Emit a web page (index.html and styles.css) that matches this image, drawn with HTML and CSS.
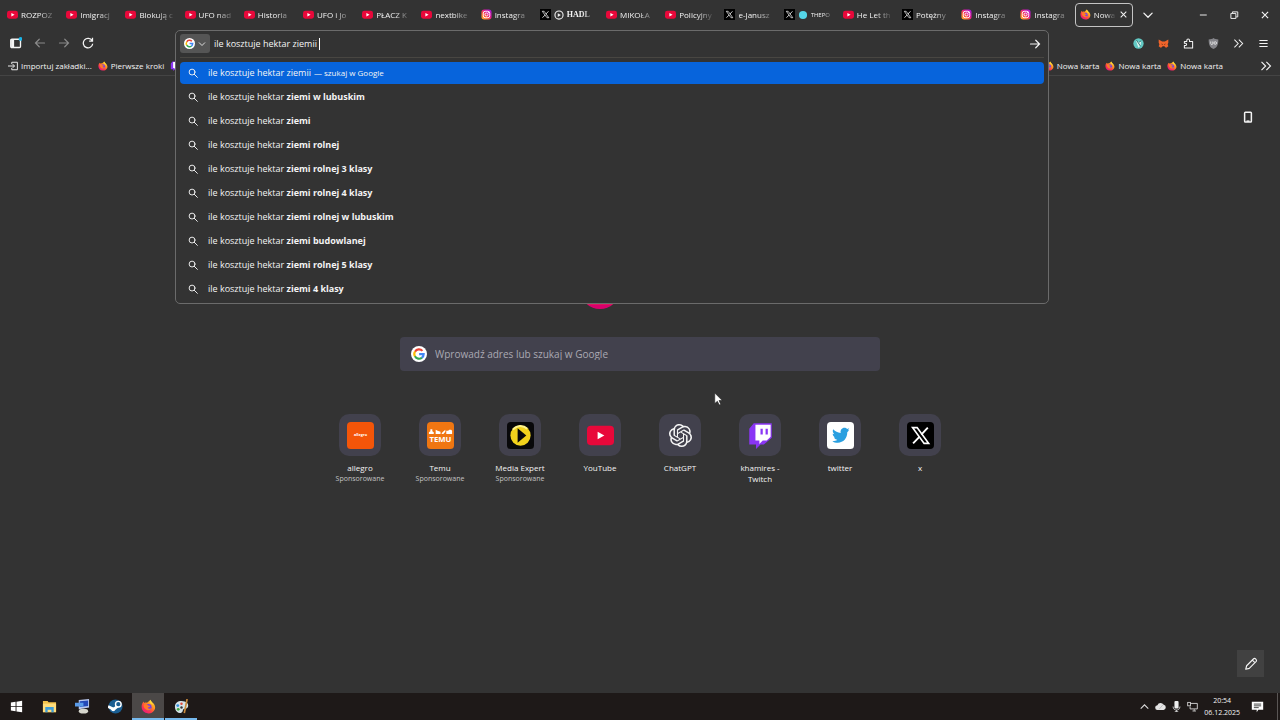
FILE: index.html
```
<!DOCTYPE html>
<html lang="pl">
<head>
  <meta charset="UTF-8">
  <meta name="viewport" content="width=device-width, initial-scale=1.0">
  <title>Nowa karta</title>
  <link rel="stylesheet" href="styles.css">
</head>
<body>
  <!-- shared icons -->
  <svg class="sprite" aria-hidden="true">
    <linearGradient id="ig" x1="0" y1="1" x2="1" y2="0">
      <stop offset="0" stop-color="#ffc530"/><stop offset=".35" stop-color="#ff5a35"/><stop offset=".6" stop-color="#e0169a"/><stop offset="1" stop-color="#9a20e0"/>
    </linearGradient>
    <linearGradient id="ff" x1="1" y1="0" x2=".2" y2="1">
      <stop offset="0" stop-color="#fff04a"/><stop offset=".4" stop-color="#ff9a1f"/><stop offset=".7" stop-color="#ff3b46"/><stop offset="1" stop-color="#e31587"/>
    </linearGradient>
    <symbol id="youtube" viewBox="0 0 24 24">
      <rect x="0" y="4" width="24" height="17" rx="5" fill="#e8083a"/>
      <path d="M9.5 8.500v8l7-4z" fill="#fff"/>
    </symbol>
    <symbol id="instagram" viewBox="0 0 24 24">
      <rect x="1" y="1" width="22" height="22" rx="6" fill="url(#ig)"/>
      <rect x="5" y="5" width="14" height="14" rx="4" fill="none" stroke="#fff" stroke-width="2"/>
      <circle cx="12" cy="12" r="3.300" fill="none" stroke="#fff" stroke-width="2"/>
      <circle cx="16.200" cy="7.800" r="1.200" fill="#fff"/>
    </symbol>
    <symbol id="x" viewBox="0 0 24 24">
      <rect width="24" height="24" fill="#000"/>
      <path d="M5 5h4l10.200 14h-4z" fill="none" stroke="#fff" stroke-width="1.500"/>
      <path d="M18.500 5l-5.800 6.300M11 13.200L5.400 19" stroke="#fff" stroke-width="1.700"/>
    </symbol>
    <symbol id="firefox" viewBox="0 0 24 24">
      <path d="M15 1c1 3 3 3.500 5.500 6.500C23 11 23.500 15 21 18.500 18.500 22 15 23.500 11.500 23 5 22.500 1 18 1 12.500 1 9 2 6.500 4 4l1 2.500C6.500 5.500 8 5.500 9 6c2-1 3-2 6-5z" fill="url(#ff)"/>
      <circle cx="12" cy="13" r="5" fill="#7542e5"/>
      <path d="M4 9c3-2 6-1 7.500 1.500L15 11c-1 2-3 1.500-4 3 1 2.500 4 2 6 .5-1 4-7 5-10 1.500C5 14 4 12 4 9z" fill="#ff7a27"/>
      <path d="M15 1c1 3 4 5 5 9-2-2-3-2.500-5-3-1-2-1-4 0-6z" fill="#ffd83a"/>
    </symbol>
    <symbol id="google" viewBox="0 0 24 24">
      <circle cx="12" cy="12" r="12" fill="#fff"/>
      <g fill="none" stroke-width="3.200">
        <path d="M17.200 7.300A7 7 0 0 0 6 8.500" stroke="#ea4335"/>
        <path d="M6 8.300a7 7 0 0 0 0 7.400" stroke="#fbbc05"/>
        <path d="M5.900 15.500a7 7 0 0 0 10.600 2" stroke="#34a853"/>
        <path d="M16.300 17.600A7 7 0 0 0 19 12.200h-6.800" stroke="#4285f4"/>
      </g>
    </symbol>
    <symbol id="twitch" viewBox="0 0 24 24">
      <path d="M6 1h16v13l-7 6h-3l-4 4v-4H2V6z" fill="#8a35f5"/>
      <path d="M7.500 2.500H21V13l-3.500 3.500H14L11 19.500v-3H7.500z" fill="#fff"/>
      <path d="M12 6h2v5h-2zM16.500 6h2v5h-2z" fill="#8a35f5"/>
    </symbol>
    <symbol id="search" viewBox="0 0 16 16">
      <g fill="none" stroke="currentColor" stroke-width="1.500" stroke-linecap="round"><circle cx="6.500" cy="6.500" r="4.700"/><path d="M10 10l5 5"/></g>
    </symbol>
    <symbol id="arrow" viewBox="0 0 16 16">
      <path d="M2 8h12M9 3l5 5-5 5" fill="none" stroke="currentColor" stroke-width="1.600" stroke-linecap="round"/>
    </symbol>
    <symbol id="chevron" viewBox="0 0 16 16">
      <path d="M2.500 5.500L8 11l5.500-5.500" fill="none" stroke="currentColor" stroke-width="1.700" stroke-linecap="round"/>
    </symbol>
    <symbol id="close" viewBox="0 0 16 16">
      <path d="M3 3l10 10M13 3L3 13" fill="none" stroke="currentColor" stroke-width="1.800"/>
    </symbol>
    <symbol id="more" viewBox="0 0 16 16">
      <path d="M2 2.500L7.500 8 2 13.500M8.500 2.500L14 8l-5.500 5.500" fill="none" stroke="currentColor" stroke-width="1.500"/>
    </symbol>
  </svg>

  <header class="chrome">
    <div class="titlebar">
      <div class="tabs" role="tablist">
        <div class="tab" role="tab"><svg><use href="#youtube"/></svg><span>ROZPOZ</span></div>
        <div class="tab" role="tab"><svg><use href="#youtube"/></svg><span>Imigracj</span></div>
        <div class="tab" role="tab"><svg><use href="#youtube"/></svg><span>Blokują c</span></div>
        <div class="tab" role="tab"><svg><use href="#youtube"/></svg><span>UFO nad</span></div>
        <div class="tab" role="tab"><svg><use href="#youtube"/></svg><span>Historia</span></div>
        <div class="tab" role="tab"><svg><use href="#youtube"/></svg><span>UFO i Jo</span></div>
        <div class="tab" role="tab"><svg><use href="#youtube"/></svg><span>PŁACZ K</span></div>
        <div class="tab" role="tab"><svg><use href="#youtube"/></svg><span>nextbike</span></div>
        <div class="tab" role="tab"><svg><use href="#instagram"/></svg><span>Instagra</span></div>
        <div class="tab wide" role="tab"><svg><use href="#x"/></svg>
          <svg class="mini" viewBox="0 0 16 16"><circle cx="8" cy="8" r="6.500" fill="none" stroke="#eee" stroke-width="1.800"/><path d="M6 5v6l5-3z" fill="#eee"/></svg>
          <span class="serif">HADL</span></div>
        <div class="tab" role="tab"><svg><use href="#youtube"/></svg><span>MIKOŁA</span></div>
        <div class="tab" role="tab"><svg><use href="#youtube"/></svg><span>Policyjny</span></div>
        <div class="tab" role="tab"><svg><use href="#x"/></svg><span>e-Janusz</span></div>
        <div class="tab" role="tab"><svg><use href="#x"/></svg>
          <svg class="mini" viewBox="0 0 16 16"><circle cx="8" cy="8" r="6.500" fill="#55d6e8"/></svg>
          <span class="small">THEPO</span></div>
        <div class="tab" role="tab"><svg><use href="#youtube"/></svg><span>He Let th</span></div>
        <div class="tab" role="tab"><svg><use href="#x"/></svg><span>Potężny</span></div>
        <div class="tab" role="tab"><svg><use href="#instagram"/></svg><span>Instagra</span></div>
        <div class="tab" role="tab"><svg><use href="#instagram"/></svg><span>Instagra</span></div>
        <div class="tab active" role="tab" aria-selected="true"><svg><use href="#firefox"/></svg><span>Nowa</span>
          <button class="tab-close" aria-label="Zamknij kartę"><svg><use href="#close"/></svg></button></div>
      </div>
      <button class="icon-btn all-tabs" aria-label="Lista kart"><svg><use href="#chevron"/></svg></button>
      <div class="window-buttons">
        <button class="icon-btn" aria-label="Minimalizuj"><svg viewBox="0 0 16 16"><path d="M3 8h11" stroke="currentColor" stroke-width="1.500"/></svg></button>
        <button class="icon-btn" aria-label="Przywróć"><svg viewBox="0 0 16 16"><path d="M3 5.500h8v8H3zM5.500 5V3H14v8h-2.500" fill="none" stroke="currentColor" stroke-width="1.500"/></svg></button>
        <button class="icon-btn" aria-label="Zamknij"><svg><use href="#close"/></svg></button>
      </div>
    </div>

    <div class="navbar">
      <div class="nav-buttons">
        <button class="icon-btn" aria-label="Panel boczny"><svg viewBox="0 0 16 16"><rect x="1" y="3" width="13" height="11" rx="1.500" fill="none" stroke="currentColor" stroke-width="1.800"/><path d="M1.500 3.500h4v10h-4z" fill="currentColor"/><circle cx="14" cy="2.500" r="2.500" fill="#19b5e8"/></svg></button>
        <button class="icon-btn dim" aria-label="Wstecz" disabled><svg class="flip"><use href="#arrow"/></svg></button>
        <button class="icon-btn dim" aria-label="Dalej" disabled><svg><use href="#arrow"/></svg></button>
        <button class="icon-btn" aria-label="Odśwież"><svg viewBox="0 0 16 16"><path d="M13.500 5A6.300 6.300 0 1 0 14.300 9M14 1v4.500H9.500" fill="none" stroke="currentColor" stroke-width="1.700"/></svg></button>
      </div>

      <div class="urlbar-slot">
        <div class="urlbar">
          <div class="urlbar-input">
            <button class="engine" aria-label="Google"><svg class="engine-logo"><use href="#google"/></svg><svg class="engine-arrow"><use href="#chevron"/></svg></button>
            <input type="text" id="address" aria-label="Adres" value="ile kosztuje hektar ziemii">
            <i class="caret"></i>
            <button class="icon-btn go" aria-label="Przejdź"><svg><use href="#arrow"/></svg></button>
          </div>
          <ul class="results">
            <li class="selected"><svg><use href="#search"/></svg><span>ile kosztuje hektar ziemii</span><small>— szukaj w Google</small></li>
            <li><svg><use href="#search"/></svg><span>ile kosztuje hektar <b>ziemi w lubuskim</b></span></li>
            <li><svg><use href="#search"/></svg><span>ile kosztuje hektar <b>ziemi</b></span></li>
            <li><svg><use href="#search"/></svg><span>ile kosztuje hektar <b>ziemi rolnej</b></span></li>
            <li><svg><use href="#search"/></svg><span>ile kosztuje hektar <b>ziemi rolnej 3 klasy</b></span></li>
            <li><svg><use href="#search"/></svg><span>ile kosztuje hektar <b>ziemi rolnej 4 klasy</b></span></li>
            <li><svg><use href="#search"/></svg><span>ile kosztuje hektar <b>ziemi rolnej w lubuskim</b></span></li>
            <li><svg><use href="#search"/></svg><span>ile kosztuje hektar <b>ziemi budowlanej</b></span></li>
            <li><svg><use href="#search"/></svg><span>ile kosztuje hektar <b>ziemi rolnej 5 klasy</b></span></li>
            <li><svg><use href="#search"/></svg><span>ile kosztuje hektar <b>ziemi 4 klasy</b></span></li>
          </ul>
        </div>
      </div>

      <div class="extensions">
        <button class="icon-btn" aria-label="Rozszerzenie"><svg viewBox="0 0 16 16"><circle cx="8" cy="8" r="7.500" fill="#62c9c4"/><path d="M4 3l5 3 3-2-1 7-3 3-2-5z" fill="#d9f4ef"/><path d="M5 3l6 9M9 6l3-2" stroke="#23696b" stroke-width="1.300"/></svg></button>
        <button class="icon-btn" aria-label="MetaMask"><svg viewBox="0 0 16 16"><path d="M1 2l5 3h4l5-3v5l-1 2 1 3-3 2-2-1H6l-2 1-3-2 1-3-1-2z" fill="#f0642a"/><path d="M5 8l2 1-1 1zM11 8L9 9l1 1zM6 12h4l-1 2H7z" fill="#3b2420"/></svg></button>
        <button class="icon-btn" aria-label="Rozszerzenia"><svg viewBox="0 0 16 16"><path d="M2 5h3.500V3.500a2 2 0 0 1 4 0V5H14v9.500H2V11h1.500a1.700 1.700 0 0 0 0-3.500H2z" fill="none" stroke="currentColor" stroke-width="1.500" stroke-linejoin="round"/></svg></button>
        <button class="icon-btn" aria-label="uBlock Origin"><svg viewBox="0 0 16 16"><path d="M8 0c2 1.500 4 2 7 2 0 7-1 11-7 14C2 13 1 9 1 2c3 0 5-.5 7-2z" fill="#85858a"/><path d="M4 5v3a1.500 1.500 0 0 0 3 0V5" fill="none" stroke="#eee" stroke-width="1.200"/><circle cx="10.500" cy="7.300" r="1.900" fill="none" stroke="#eee" stroke-width="1.200"/></svg></button>
        <button class="icon-btn" aria-label="Więcej"><svg><use href="#more"/></svg></button>
        <button class="icon-btn" aria-label="Menu"><svg viewBox="0 0 16 16"><path d="M2 3.500h12M2 8h12M2 12.500h12" stroke="currentColor" stroke-width="1.500"/></svg></button>
      </div>
    </div>

    <nav class="bookmarks">
      <a href="#"><svg viewBox="0 0 16 16"><path d="M6 5V2h9v12H6v-3M0 8h10M7.500 5l3 3-3 3" fill="none" stroke="currentColor" stroke-width="1.500"/></svg>Importuj zakładki...</a>
      <a href="#"><svg><use href="#firefox"/></svg>Pierwsze kroki</a>
      <a href="#" aria-label="Twitch"><svg><use href="#twitch"/></svg></a>
      <a href="#" class="push"><svg><use href="#firefox"/></svg>Nowa karta</a>
      <a href="#"><svg><use href="#firefox"/></svg>Nowa karta</a>
      <a href="#"><svg><use href="#firefox"/></svg>Nowa karta</a>
      <button class="icon-btn overflow" aria-label="Więcej zakładek"><svg><use href="#more"/></svg></button>
    </nav>
  </header>

  <main class="newtab">
    <button class="icon-btn phone" aria-label="Telefon"><svg viewBox="0 0 16 16"><rect x="3.500" y="1.500" width="9" height="13" rx="1" fill="none" stroke="currentColor" stroke-width="2"/><path d="M6 13.500h4" stroke="currentColor" stroke-width="2"/></svg></button>

    <div class="brand"><i class="brand-logo"></i></div>

    <div class="searchbox">
      <svg><use href="#google"/></svg>
      <input type="text" aria-label="Szukaj" placeholder="Wprowadź adres lub szukaj w Google">
    </div>

    <div class="shortcuts">
      <a href="#" class="shortcut">
        <span class="tile"><svg viewBox="0 0 28 28"><rect width="28" height="28" rx="4" fill="#f45509"/><text x="14" y="15" class="allegro">allegro</text></svg></span>
        <span>allegro</span><small>Sponsorowane</small>
      </a>
      <a href="#" class="shortcut">
        <span class="tile"><svg viewBox="0 0 28 28"><rect width="28" height="28" rx="4" fill="#f07612"/><path d="M2 12.500v-2l1.500-1V7.500h2v2l1.500 1v2zM9 8l2 1 3 1v2.500H9zM15 12.500l1-2 3-2.500v2l-2 2.500zM20 9h2l1-1h2l1 1v3.500h-6z" fill="#fff"/><text x="14" y="21" class="temu">TEMU</text></svg></span>
        <span>Temu</span><small>Sponsorowane</small>
      </a>
      <a href="#" class="shortcut">
        <span class="tile"><svg viewBox="0 0 28 28"><rect width="28" height="28" rx="4" fill="#08080a"/><circle cx="14" cy="14" r="10.500" fill="#f2d21c"/><path d="M6 8a10 10 0 0 1 15-1" fill="none" stroke="#fff38a" stroke-width="2"/><path d="M11 6.500l9 7.500-9 7.500z" fill="#08080a"/></svg></span>
        <span>Media Expert</span><small>Sponsorowane</small>
      </a>
      <a href="#" class="shortcut">
        <span class="tile"><svg viewBox="0 0 28 28"><rect y="4" width="28" height="20" rx="4" fill="#e8083a"/><path d="M11 10v8l7-4z" fill="#fff"/></svg></span>
        <span>YouTube</span>
      </a>
      <a href="#" class="shortcut">
        <span class="tile"><svg viewBox="-2 -2 28 28"><path fill="#f4f4f4" d="M22.28 9.82a5.98 5.98 0 0 0-.52-4.91 6.05 6.05 0 0 0-6.51-2.9A6.07 6.07 0 0 0 4.98 4.18a5.98 5.98 0 0 0-4 2.9 6.05 6.05 0 0 0 .74 7.1 5.98 5.98 0 0 0 .51 4.91 6.05 6.05 0 0 0 6.52 2.9A5.98 5.98 0 0 0 13.26 24a6.06 6.06 0 0 0 5.77-4.21 5.99 5.99 0 0 0 4-2.9 6.06 6.06 0 0 0-.75-7.07zm-9.02 12.61a4.48 4.48 0 0 1-2.88-1.04l.14-.08 4.78-2.76a.79.79 0 0 0 .39-.68v-6.74l2.02 1.17a.07.07 0 0 1 .04.05v5.58a4.5 4.5 0 0 1-4.49 4.5zm-9.66-4.13a4.47 4.47 0 0 1-.54-3.01l.14.08 4.79 2.76a.77.77 0 0 0 .78 0l5.84-3.37v2.33a.08.08 0 0 1-.03.06L9.74 19.95a4.5 4.5 0 0 1-6.14-1.65zM2.34 7.9a4.49 4.49 0 0 1 2.37-1.98V11.6a.77.77 0 0 0 .38.68l5.82 3.35-2.02 1.17a.08.08 0 0 1-.07 0l-4.83-2.79A4.5 4.5 0 0 1 2.34 7.87zm16.6 3.85L13.1 8.36l2.02-1.16a.08.08 0 0 1 .07 0l4.83 2.79a4.49 4.49 0 0 1-.68 8.11v-5.68a.79.79 0 0 0-.4-.67zm2.01-3.02l-.15-.09-4.77-2.78a.78.78 0 0 0-.78 0L9.41 9.23V6.9a.07.07 0 0 1 .03-.06l4.83-2.79a4.5 4.5 0 0 1 6.68 4.66zM8.31 12.86L6.29 11.7a.08.08 0 0 1-.04-.06V6.07a4.5 4.5 0 0 1 7.38-3.45l-.15.08L8.7 5.46a.79.79 0 0 0-.39.68zm1.09-2.36L12 9l2.61 1.5v3L12.01 15 9.4 13.5z"/></svg></span>
        <span>ChatGPT</span>
      </a>
      <a href="#" class="shortcut">
        <span class="tile"><svg><use href="#twitch"/></svg></span>
        <span>khamires -<br>Twitch</span>
      </a>
      <a href="#" class="shortcut">
        <span class="tile"><svg viewBox="0 0 28 28"><rect width="28" height="28" rx="4" fill="#fff"/><path d="M23 8.500l-2 2.200c.2 6-4 10.800-9.800 10.800-2.300 0-4.200-.6-5.700-1.600 2 .1 3.800-.4 5.200-1.500-1.700-.1-2.900-1.100-3.400-2.500h1.600c-1.800-.5-3-2-3-3.800l1.700.5C6 11.300 5.500 9.200 6.500 7.500c2 2.300 4.500 3.600 7.700 3.800C13.500 8.500 15.500 6 18 6c1.200 0 2.200.5 2.900 1.200L23 6.500l-1.200 2.100z" fill="#2a9fe0"/></svg></span>
        <span>twitter</span>
      </a>
      <a href="#" class="shortcut">
        <span class="tile"><svg class="rounded"><use href="#x"/></svg></span>
        <span>x</span>
      </a>
    </div>

    <button class="customize" aria-label="Dostosuj"><svg viewBox="0 0 16 16"><path d="M2 14l1-4L11 2c1.500-1.200 4.200 1.500 3 3l-8 8zM9.500 3.500l3 3" fill="none" stroke="currentColor" stroke-width="1.300" stroke-linejoin="round"/></svg></button>
  </main>

  <footer class="taskbar">
    <button class="task" aria-label="Start"><svg viewBox="0 0 16 16"><path d="M2 3.800l5-.8v4.600H2zM8 2.800l6-.9v5.700H8zM2 8.500h5v4.600l-5-.8zM8 8.500h6v5.700l-6-.9z" fill="#fff"/></svg></button>
    <button class="task" aria-label="Eksplorator plików"><svg viewBox="0 0 16 16"><path d="M1 2h5l1 1.500h8V14H1z" fill="#f3c24c"/><path d="M1 5h14v9H1z" fill="#ffdd7c"/><path d="M3.500 14V8.500h9V14h-2.500v-2.500H6V14z" fill="#3e9dd8"/></svg></button>
    <button class="task" aria-label="Komputer"><svg viewBox="0 0 16 16"><path d="M4 1l11-1v9L4 11z" fill="#b9c8ee"/><path d="M5 2.500l9-1v6l-9 1z" fill="#2449b8"/><path d="M0 4h9v4H0z" fill="#5a9be8"/><ellipse cx="9" cy="13" rx="5" ry="2.500" fill="#d6d6cc"/></svg></button>
    <button class="task" aria-label="Steam"><svg viewBox="0 0 16 16"><circle cx="8" cy="8" r="7.500" fill="#1a5e92"/><path d="M0 8l6 3 5-4" fill="none" stroke="#fff" stroke-width="3"/><circle cx="11" cy="5.500" r="3" fill="#1a5e92" stroke="#fff" stroke-width="1.500"/><circle cx="5.500" cy="11" r="2" fill="#fff"/></svg></button>
    <button class="task running current" aria-label="Firefox"><svg><use href="#firefox"/></svg></button>
    <button class="task running" aria-label="Paint"><svg viewBox="0 0 16 16"><path d="M8 2c5 0 8 3 7 6s-4 2-5 3 0 4-4 4c-4-1-5-4-5-7 0-4 3-6 7-6z" fill="#d5e3e8"/><circle cx="4" cy="7" r="1.500" fill="#2f8fe0"/><circle cx="8" cy="5" r="1.300" fill="#e24a3c"/><circle cx="4.500" cy="11" r="1.500" fill="#43a945"/><circle cx="8" cy="9" r="1.300" fill="#333"/><path d="M14 0l-3 15" stroke="#c98a3c" stroke-width="1.800"/></svg></button>

    <div class="tray">
      <svg viewBox="0 0 16 16"><path d="M2.500 11L8 5.500l5.500 5.500" fill="none" stroke="#ddd" stroke-width="1.500"/></svg>
      <svg viewBox="0 0 16 16"><path d="M4 13a3.500 3.500 0 0 1-.5-7 5 5 0 0 1 9-.5A3.800 3.800 0 0 1 12.500 13z" fill="#e4e4e4"/><path d="M6 12l6-7" stroke="#aaa"/></svg>
      <svg viewBox="0 0 16 16"><rect x="5" y="0" width="6" height="11" rx="1.500" fill="#eee"/><path d="M3 8c0 7 10 7 10 0M8 13v3M5.500 15.500h5" fill="none" stroke="#ccc" stroke-width="1.300"/></svg>
      <svg viewBox="0 0 16 16"><path d="M5 3.500h10v8H4.500V8M8 14.500h5M10.500 12v2" fill="none" stroke="#ddd" stroke-width="1.300"/><rect x="1" y="2" width="4" height="5" fill="none" stroke="#ddd" stroke-width="1.200"/></svg>
      <time datetime="2025-12-06T20:54">20:54<br>06.12.2025</time>
      <svg class="notice" viewBox="0 0 16 16"><path d="M1 2h14v10H9l-2 3v-3H1z" fill="#fff"/><path d="M3.500 5h9M3.500 7.200h9M3.500 9.400h6" stroke="#222"/></svg>
    </div>
  </footer>

  <svg class="pointer" viewBox="0 0 12 18"><path d="M1 1v14l3.500-3 2.500 5 2-1-2.300-5H11z" fill="#fff" stroke="#222" stroke-width=".8"/></svg>
</body>
</html>
```
FILE: styles.css
```
:root {
  color-scheme: dark;
  --bg: #333333;
  --text: #f4f4f4;
  --tile: #42414d;
  --line: #6b6b6b;
}
* {
  box-sizing: border-box;
}
body {
  margin: 0;
  min-height: 100vh;
  display: flex;
  flex-direction: column;
  position: relative;
  background: var(--bg);
  color: var(--text);
  font-family: "Segoe UI", "Open Sans", "Noto Sans", sans-serif;
  font-size: 8px;
  line-height: 12px;
}
svg {
  display: block;
  flex: none;
}
a {
  color: inherit;
  text-decoration: none;
}
button,
input {
  font: inherit;
  color: inherit;
  border: 0;
  padding: 0;
  background: none;
  outline: none;
}
.sprite {
  position: absolute;
  width: 0;
  height: 0;
}
.icon-btn {
  display: flex;
  align-items: center;
  justify-content: center;
  width: 24px;
  height: 24px;
}
.icon-btn svg {
  width: 12px;
  height: 12px;
}

/* tabs */
.titlebar {
  display: flex;
  align-items: center;
  height: 29px;
}
.tabs {
  flex: 1;
  display: flex;
  min-width: 0;
  padding-left: 1px;
}
.tab {
  flex: 1 1 14px;
  min-width: 0;
  display: flex;
  align-items: center;
  gap: 3px;
  height: 24px;
  margin-left: 1px;
  padding: 0 2px 0 4px;
  border: 1px solid transparent;
  border-radius: 4px;
}
.tab svg {
  width: 11px;
  height: 11px;
}
.tab .mini {
  width: 10px;
  height: 10px;
}
.tab span {
  flex: 1;
  min-width: 0;
  overflow: hidden;
  white-space: nowrap;
  mask-image: linear-gradient(to right, #000 50%, transparent);
}
.tab.wide {
  flex-basis: 21px;
}
.tab .serif {
  font-family: "Liberation Serif", serif;
  font-weight: bold;
}
.tab .small {
  font-size: 6px;
}
.tab.active {
  padding-right: 4px;
  border-color: #c4c4c4;
}
.tab-close svg {
  width: 9px;
  height: 9px;
}
.all-tabs {
  margin-left: 3px;
}
.window-buttons {
  display: flex;
  gap: 7px;
  margin-left: 31px;
  padding-right: 3px;
}
.window-buttons svg {
  width: 10px;
  height: 10px;
}

/* toolbar */
.navbar {
  display: flex;
  align-items: center;
  height: 28px;
}
.nav-buttons {
  display: flex;
  width: 175px;
  padding-left: 4px;
}
.dim {
  color: #8a8a8a;
}
.flip {
  transform: scaleX(-1);
}
.urlbar-slot {
  flex: 1;
  position: relative;
  align-self: stretch;
}
.urlbar {
  position: absolute;
  z-index: 2;
  top: 1px;
  left: 0;
  right: 0;
  padding: 0 4px 3px 4px;
  background: var(--bg);
  border: 1px solid var(--line);
  border-radius: 5px;
  font-size: 9px;
}
.urlbar-input {
  display: flex;
  align-items: center;
  height: 27px;
  padding-bottom: 1px;
  border-bottom: 1px solid #484642;
}
.engine {
  display: flex;
  align-items: center;
  justify-content: space-between;
  width: 30px;
  height: 19px;
  margin-right: 4px;
  padding: 0 4px;
  border-radius: 3px;
  background: #555555;
}
.engine-logo {
  width: 11px;
  height: 11px;
}
.engine-arrow {
  width: 8px;
  height: 8px;
}
.urlbar-input input {
  field-sizing: content;
}
.caret {
  width: 1px;
  height: 12px;
  margin-left: 2px;
  background: #fff;
}
.go {
  margin-left: auto;
  width: 18px;
}
.results {
  display: flex;
  flex-direction: column;
  gap: 2px;
  margin: 0;
  padding: 4px 0 0;
  list-style: none;
}
.results li {
  display: flex;
  align-items: center;
  height: 22px;
  padding-left: 8px;
  border-radius: 4px;
}
.results svg {
  width: 10px;
  height: 10px;
  margin-right: 10px;
}
.results small {
  margin-left: 3px;
  font-size: 8px;
}
.results .selected {
  background: #0764dc;
}
.extensions {
  display: flex;
  justify-content: space-between;
  width: 231px;
  padding: 0 4px 0 77px;
}
.extensions svg {
  width: 11px;
  height: 11px;
}

/* bookmarks */
.bookmarks {
  display: flex;
  align-items: center;
  gap: 6px;
  height: 19px;
  padding-left: 8px;
  border-bottom: 1px solid #444444;
}
.bookmarks a {
  display: flex;
  align-items: center;
  gap: 3px;
}
.bookmarks a svg {
  width: 10px;
  height: 10px;
}
.bookmarks .push {
  margin-left: auto;
}
.overflow {
  margin-left: 23px;
  width: 28px;
  height: 18px;
}

/* new tab page */
.newtab {
  flex: 1;
  position: relative;
  display: flex;
  flex-direction: column;
  align-items: center;
}
.phone {
  position: absolute;
  top: 29px;
  right: 20px;
}
.brand {
  margin-top: 193px;
  padding-right: 80px;
}
.brand-logo {
  display: block;
  width: 40px;
  height: 40px;
  border-radius: 50%;
  background: linear-gradient(#ff9a1f, #f0503c 85%, #d8006c 90%);
}
.searchbox {
  display: flex;
  align-items: center;
  gap: 8px;
  width: 480px;
  max-width: 90%;
  height: 34px;
  margin-top: 28px;
  padding: 0 11px;
  border-radius: 4px;
  background: var(--tile);
}
.searchbox svg {
  width: 16px;
  height: 16px;
}
.searchbox input {
  flex: 1;
  font-size: 10px;
}
.searchbox input::placeholder {
  color: #aaa9b3;
}
.shortcuts {
  display: flex;
  flex-wrap: wrap;
  justify-content: center;
  margin-top: 43px;
}
.shortcut {
  display: flex;
  flex-direction: column;
  align-items: center;
  width: 80px;
  text-align: center;
  line-height: 11px;
}
.shortcut small {
  font-size: 7px;
  color: #c4c4c4;
}
.tile {
  display: grid;
  place-items: center;
  width: 42px;
  height: 42px;
  margin-bottom: 6px;
  border-radius: 10px;
  background: var(--tile);
}
.tile svg {
  width: 27px;
  height: 27px;
}
.rounded {
  border-radius: 4px;
}
.allegro,
.temu {
  fill: #fff;
  font-weight: bold;
  text-anchor: middle;
}
.allegro {
  font-size: 4px;
}
.temu {
  font-size: 8px;
}
.customize {
  position: absolute;
  right: 16px;
  bottom: 16px;
  display: grid;
  place-items: center;
  width: 27px;
  height: 27px;
  background: #414141;
}
.customize svg {
  width: 14px;
  height: 14px;
}

/* system taskbar */
.taskbar {
  display: flex;
  height: 27px;
  padding-right: 2px;
  background: #1e1918;
}
.task {
  display: grid;
  place-items: center;
  width: 32px;
  margin-right: 1px;
}
.task svg {
  width: 15px;
  height: 15px;
}
.running {
  box-shadow: inset 0 -2px #76b9ed;
}
.current {
  background: #4b4847;
}
.tray {
  display: flex;
  align-items: center;
  gap: 5px;
  margin-left: auto;
  padding-right: 13px;
  border-right: 1px solid #5a5655;
}
.tray svg {
  width: 11px;
  height: 11px;
}
.tray time {
  margin: 0 6px 0 1px;
  font-size: 7px;
  text-align: center;
}
.tray .notice {
  width: 13px;
  height: 13px;
}

.pointer {
  position: absolute;
  z-index: 3;
  top: 392px;
  left: 714px;
  width: 9px;
  height: 14px;
}
```
